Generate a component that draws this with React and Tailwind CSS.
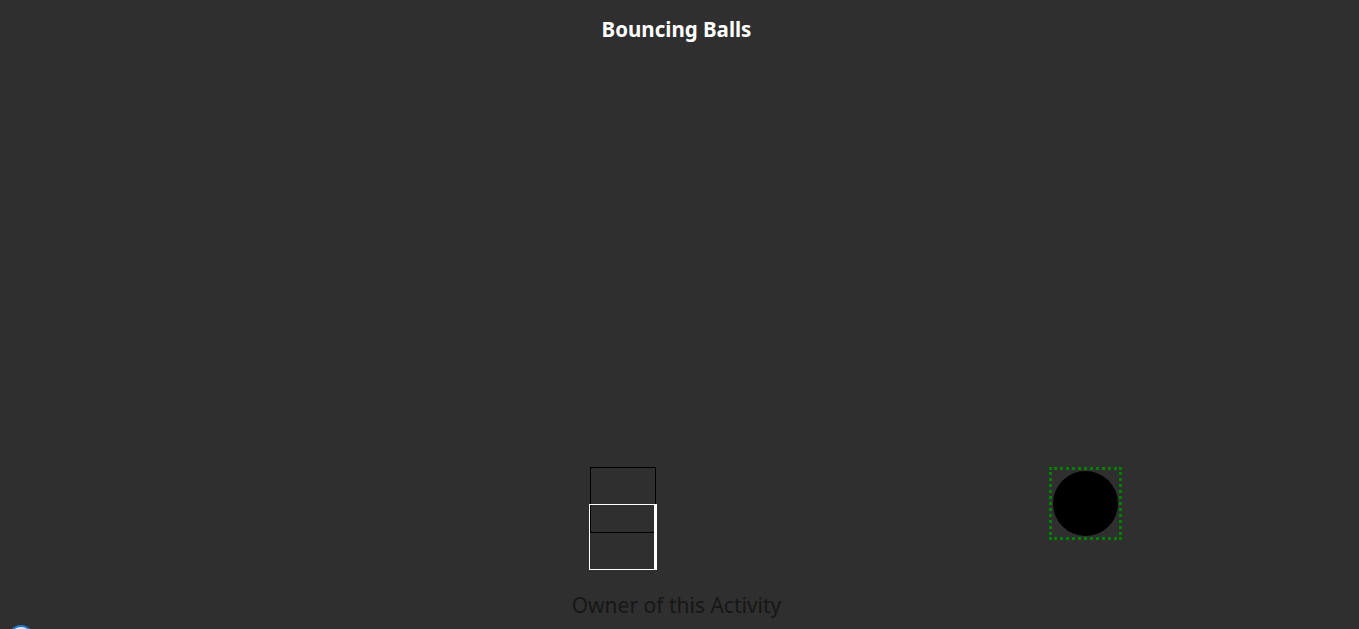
import React from "react";

export default function App() {
    return (
        <div
            className="relative w-full h-[629px] overflow-hidden bg-[#2f2f2f]"
            style={{ fontFamily: '"Noto Sans", "Open Sans", sans-serif' }}
        >
            <h1 className="pt-[14px] pr-[6px] text-center text-[20.5px] leading-[30px] font-bold text-white">
                Bouncing Balls
            </h1>

            {/* play field */}
            <div className="relative h-[545px]">
                <div className="absolute left-[590px] top-[423px] w-[66px] h-[66px] border border-black" />
                <div className="absolute left-[589px] top-[460px] w-[68px] h-[66px] border border-white border-r-[3px]" />
                <div className="absolute left-[1049px] top-[423px] w-[73px] h-[73px] border-[3px] border-dotted border-[#008000] flex items-center justify-center">
                    <div className="w-[65px] h-[65px] rounded-full bg-black" />
                </div>
            </div>

            <p className="pt-[2px] pr-[6px] text-center text-[21px] leading-[28px] font-normal text-[#171717]">
                Owner of this Activity
            </p>

            <div className="absolute left-[8px] top-[625px] w-[26px] h-[26px] rounded-full bg-[#dbe9f5] border-2 border-[#1e78d2]" />
        </div>
    );
}
